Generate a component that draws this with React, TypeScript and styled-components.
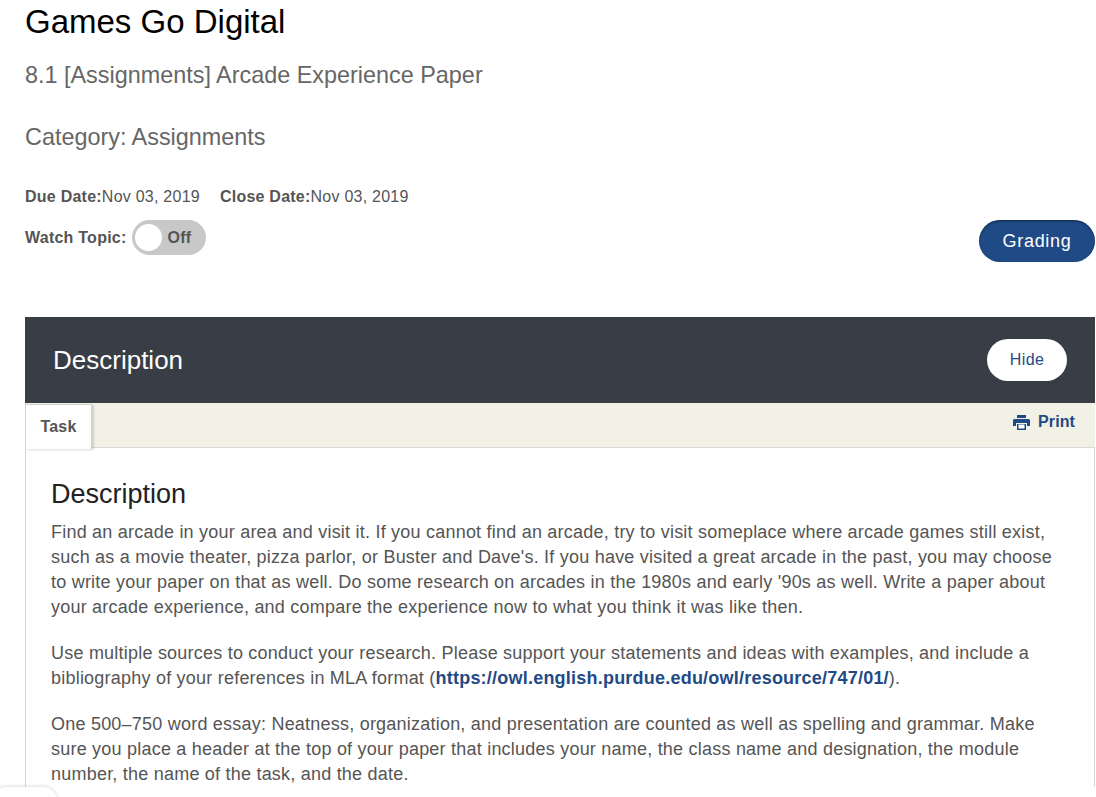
import styled, { createGlobalStyle } from 'styled-components';

const GlobalStyle = createGlobalStyle`
  html, body {
    margin: 0;
    height: 797px;
    overflow: hidden;
    background: #fff;
    font-family: "Liberation Sans", Arial, sans-serif;
    color: #555;
  }
`;

const Page = styled.div`
  padding: 0 1px 0 25px;
`;

const Title = styled.h1`
  margin: 0;
  padding-top: 2px;
  font-size: 33px;
  line-height: 40px;
  font-weight: 400;
  color: #000;
`;

const Subtitle = styled.h2`
  margin: 19px 0 0;
  font-size: 23.4px;
  line-height: 28px;
  font-weight: 400;
  color: #666;
`;

const Category = styled(Subtitle)`
  margin-top: 34px;
`;

const DateRow = styled.div`
  display: flex;
  gap: 20px;
  margin-top: 36px;
  font-size: 16px;
  line-height: 20px;
  letter-spacing: .24px;
`;

const DateLabel = styled.b`
  font-weight: 700;
`;

const ActionRow = styled.div`
  display: flex;
  align-items: flex-start;
  justify-content: space-between;
  margin-top: 13px;
`;

const Watch = styled.div`
  display: flex;
  align-items: center;
  gap: 5px;
  font-size: 16px;
  font-weight: 700;
  letter-spacing: .24px;
`;

const Toggle = styled.div`
  display: flex;
  align-items: center;
  width: 74px;
  height: 35px;
  box-sizing: border-box;
  padding: 0 3px;
  gap: 6px;
  border-radius: 18px;
  background: #c8c8c8;
`;

const Knob = styled.span`
  width: 27px;
  height: 27px;
  border-radius: 50%;
  background: #fff;
`;

const PillButton = styled.button<{ $filled?: boolean }>`
  border: 0;
  border-radius: 21px;
  height: 42px;
  font-family: inherit;
  font-size: ${p => (p.$filled ? '18px' : '16px')};
  letter-spacing: ${p => (p.$filled ? '.7px' : '.4px')};
  color: ${p => (p.$filled ? '#fff' : '#1f4a85')};
  background: ${p => (p.$filled ? '#1f4a85' : '#fff')};
  box-shadow: ${p => (p.$filled ? 'inset 0 1px 2px rgba(0, 0, 0, .5)' : 'none')};
  padding: 0;
  width: ${p => (p.$filled ? '116px' : '80px')};
`;

const Panel = styled.section`
  margin-top: 55px;
`;

const PanelHead = styled.div`
  display: flex;
  align-items: center;
  justify-content: space-between;
  height: 86px;
  padding: 0 28px;
  background: #393d46;
`;

const PanelTitle = styled.h3`
  margin: 0;
  font-size: 26px;
  font-weight: 400;
  color: #fff;
`;

const TabBar = styled.div`
  display: flex;
  justify-content: space-between;
  height: 44px;
  background: #f1f1e6;
  border-bottom: 1px solid #d8d8d8;
`;

const Tab = styled.div`
  width: 67px;
  height: 45px;
  box-sizing: border-box;
  margin-top: 1px;
  padding-top: 13px;
  text-align: center;
  font-size: 16px;
  font-weight: 700;
  letter-spacing: .2px;
  background: #fff;
  border: 1px solid #d0d0d0;
  border-bottom: 0;
  box-shadow: 2px 1px 2px rgba(0, 0, 0, .14);
`;

const PrintLink = styled.a`
  display: flex;
  align-items: center;
  gap: 8px;
  height: 38px;
  padding-right: 20px;
  font-size: 16px;
  font-weight: 700;
  letter-spacing: .1px;
  color: #1f4a85;
`;

const Body = styled.div`
  padding: 31px 25px 0;
  border-left: 1px solid #d8d8d8;
  border-right: 1px solid #d8d8d8;
`;

const BodyHeading = styled.h4`
  margin: 0 0 11px;
  font-size: 27px;
  line-height: 30px;
  font-weight: 400;
  color: #222;
`;

const Para = styled.p`
  margin: 0 0 21px;
  font-size: 18px;
  line-height: 25px;
  letter-spacing: .22px;
  color: #555;
`;

const BodyLink = styled.a`
  font-weight: 700;
  color: #1f4a85;
`;

const Floating = styled.div`
  position: fixed;
  left: -8px;
  top: 787px;
  width: 65px;
  height: 40px;
  border-radius: 14px;
  background: #fff;
  box-shadow: 0 0 4px rgba(0, 0, 0, .2);
`;

function PrintIcon() {
  return (
    <svg width="17" height="15" viewBox="0 0 17 15" aria-hidden="true">
      <path fill="#1f4a85" d="M4 0h9v3H4z" />
      <path fill="#1f4a85" d="M1.5 4h14A1.5 1.5 0 0 1 17 5.5V11h-3V8H3v3H0V5.5A1.5 1.5 0 0 1 1.5 4z" />
      <path fill="#1f4a85" d="M4 9h9v6H4z" />
      <path fill="#fff" d="M5.5 9.5h6V13.5h-6z" />
    </svg>
  );
}

export default function App() {
  return (
    <>
      <GlobalStyle />
      <Page>
        <Title>Games Go Digital</Title>
        <Subtitle>8.1 [Assignments] Arcade Experience Paper</Subtitle>
        <Category>Category: Assignments</Category>
        <DateRow>
          <span><DateLabel>Due Date:</DateLabel>Nov 03, 2019</span>
          <span><DateLabel>Close Date:</DateLabel>Nov 03, 2019</span>
        </DateRow>
        <ActionRow>
          <Watch>
            Watch Topic:
            <Toggle>
              <Knob />
              Off
            </Toggle>
          </Watch>
          <PillButton $filled>Grading</PillButton>
        </ActionRow>
        <Panel>
          <PanelHead>
            <PanelTitle>Description</PanelTitle>
            <PillButton>Hide</PillButton>
          </PanelHead>
          <TabBar>
            <Tab>Task</Tab>
            <PrintLink><PrintIcon />Print</PrintLink>
          </TabBar>
          <Body>
            <BodyHeading>Description</BodyHeading>
            <Para>
              Find an arcade in your area and visit it. If you cannot find an arcade, try to visit someplace where arcade games still exist, such as a movie theater, pizza parlor, or Buster and Dave's. If you have visited a great arcade in the past, you may choose to write your paper on that as well. Do some research on arcades in the 1980s and early '90s as well. Write a paper about your arcade experience, and compare the experience now to what you think it was like then.
            </Para>
            <Para>
              Use multiple sources to conduct your research. Please support your statements and ideas with examples, and include a bibliography of your references in MLA format (<BodyLink>https://owl.english.purdue.edu/owl/resource/747/01/</BodyLink>).
            </Para>
            <Para>
              One 500–750 word essay: Neatness, organization, and presentation are counted as well as spelling and grammar. Make sure you place a header at the top of your paper that includes your name, the class name and designation, the module number, the name of the task, and the date.
            </Para>
          </Body>
        </Panel>
      </Page>
      <Floating />
    </>
  );
}
